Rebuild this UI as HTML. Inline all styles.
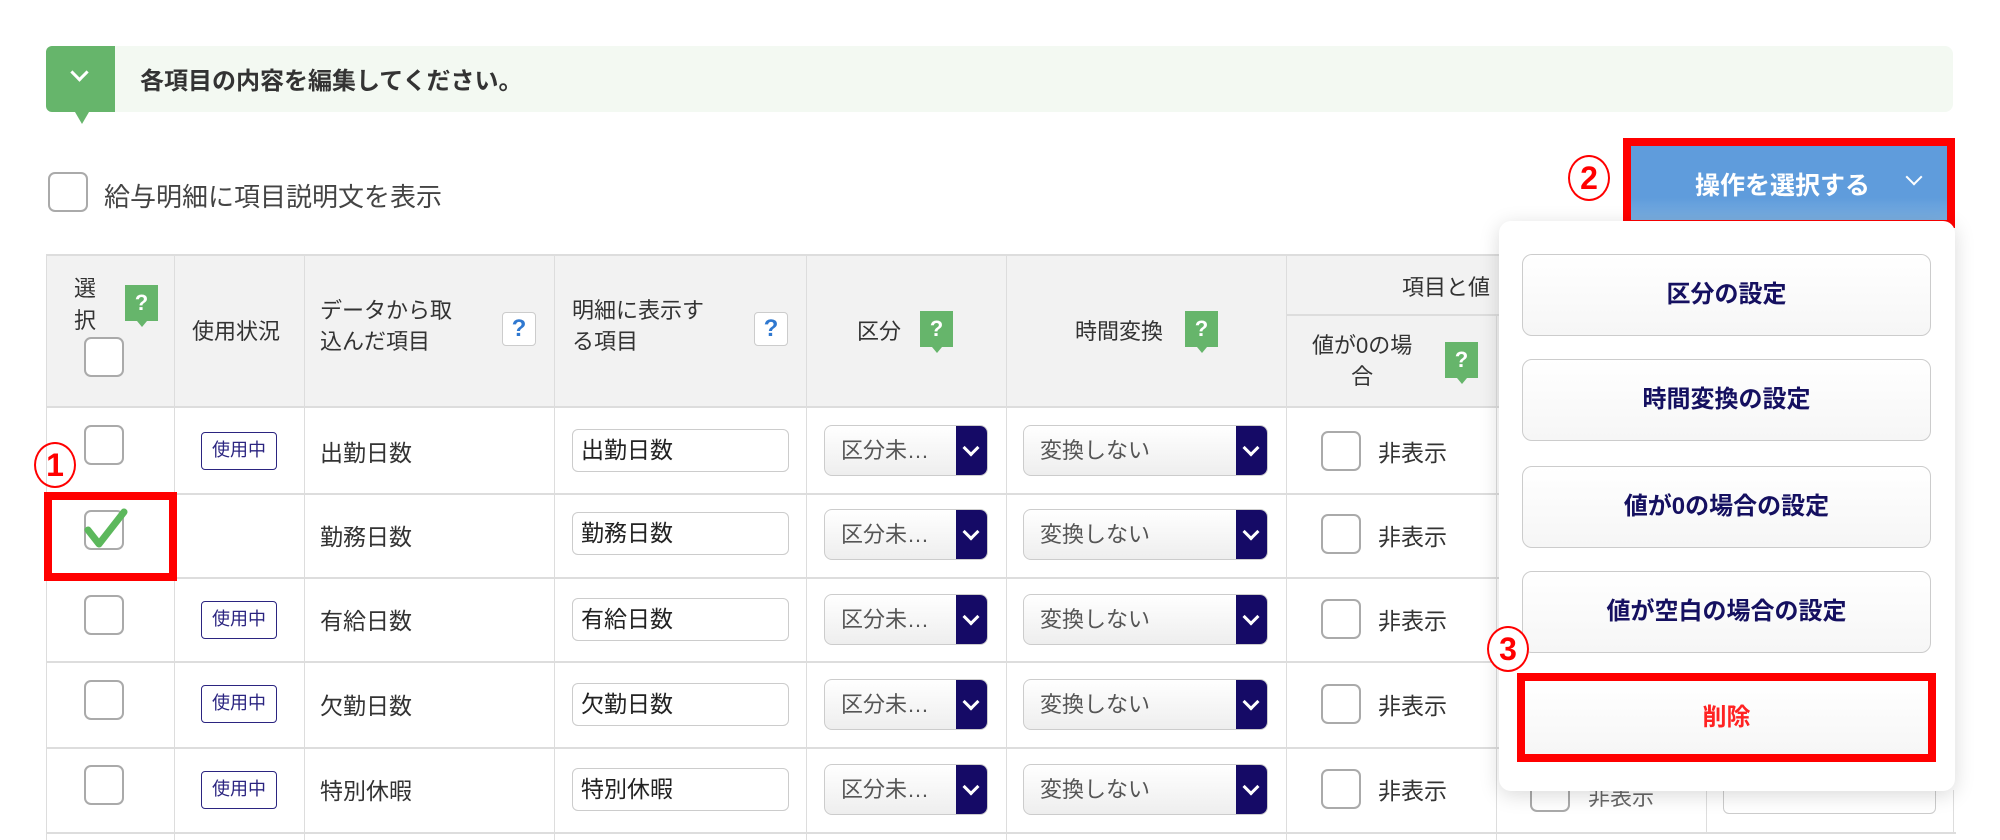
<!DOCTYPE html>
<html><head><meta charset="utf-8"><style>
*{box-sizing:border-box;margin:0;padding:0}
body{width:2000px;height:840px;background:#fff;position:relative;overflow:hidden;font-family:"Liberation Sans","Noto Sans CJK JP",sans-serif;color:#333;font-size:22px}
.a{position:absolute}
.cb{position:absolute;width:40px;height:40px;border:2px solid #aaa;border-radius:7px;background:#fff}
.vl{position:absolute;width:1px;background:#ddd}
.hl{position:absolute;height:2px;background:#ddd}
.gq{position:absolute;width:33px;height:36px;background:#66b56b;color:#fff;font-weight:bold;font-size:22px;text-align:center;line-height:36px}
.gq:after{content:"";position:absolute;left:12px;bottom:-6px;border:5px solid transparent;border-top:6px solid #66b56b;border-bottom:0}
.bq{position:absolute;width:34px;height:34px;border:1px solid #ccc;border-radius:4px;background:#fff;color:#2f78d0;font-weight:bold;font-size:24px;text-align:center;line-height:32px}
.badge{position:absolute;left:201px;width:76px;height:38px;border:1.5px solid #2b2480;border-radius:4px;color:#2b2480;font-size:18px;text-align:center;line-height:35px}
.inp{position:absolute;left:572px;width:217px;height:43px;border:1px solid #ccc;border-radius:6px;padding-left:8px;line-height:41px;font-size:23px;color:#222}
.sel{position:absolute;height:51px;border:1px solid #ccc;border-radius:8px;background:linear-gradient(#fff,#eee);padding-left:16px;line-height:49px;color:#555;overflow:hidden}
.sel i{position:absolute;right:0;top:0;width:31px;height:100%;background:#150a66}
.sel i:after{content:"";position:absolute;left:9px;top:16px;width:9px;height:9px;border-right:3px solid #fff;border-bottom:3px solid #fff;transform:rotate(45deg)}
.mb{position:absolute;left:1522px;width:409px;height:82px;border:1.5px solid #ccc;border-radius:10px;background:linear-gradient(#fff,#f6f6f6);text-align:center;line-height:80px;font-weight:bold;color:#151060;font-size:24px}
.circ{position:absolute;width:42px;height:46px;border:2px solid #f00;border-radius:50%;color:#f00;font-weight:bold;font-size:32px;text-align:center;line-height:42px}
.t{position:absolute;font-size:23px}
</style></head><body>
<!-- banner -->
<div class="a" style="left:46px;top:46px;width:1907px;height:66px;background:#f3f9f2;border-radius:8px"></div>
<div class="a" style="left:46px;top:46px;width:69px;height:66px;background:#66b56b;border-radius:6px 0 0 6px"></div>
<div class="a" style="left:75px;top:112px;border:7px solid transparent;border-top:12px solid #66b56b;border-bottom:0"></div>
<div class="a" style="left:73px;top:66px;width:13px;height:13px;border-right:3px solid #fff;border-bottom:3px solid #fff;transform:rotate(45deg)"></div>
<div class="a" style="left:140px;top:61px;font-weight:bold;font-size:24px;color:#333">各項目の内容を編集してください。</div>
<!-- checkbox label -->
<div class="cb" style="left:48px;top:172px"></div>
<div class="a" style="left:104px;top:177px;font-size:26px;color:#444">給与明細に項目説明文を表示</div>
<!-- table header -->
<div class="a" style="left:46px;top:254px;width:1460px;height:153px;background:#f2f2f2;border-top:2px solid #ddd"></div>
<div class="hl" style="left:46px;top:406px;width:1460px"></div>
<div class="hl" style="left:1286px;top:314px;width:220px"></div>
<div class="vl" style="left:46px;top:254px;height:586px"></div>
<div class="vl" style="left:174px;top:254px;height:586px"></div>
<div class="vl" style="left:304px;top:254px;height:586px"></div>
<div class="vl" style="left:554px;top:254px;height:586px"></div>
<div class="vl" style="left:806px;top:254px;height:586px"></div>
<div class="vl" style="left:1006px;top:254px;height:586px"></div>
<div class="vl" style="left:1286px;top:254px;height:586px"></div>
<div class="vl" style="left:1496px;top:315px;height:525px"></div>
<div class="a" style="left:74px;top:273px;line-height:32px">選<br>択</div>
<div class="gq" style="left:125px;top:285px">?</div>
<div class="cb" style="left:84px;top:337px"></div>
<div class="a" style="left:192px;top:314px">使用状況</div>
<div class="a" style="left:320px;top:295px;line-height:31px">データから取<br>込んだ項目</div>
<div class="bq" style="left:502px;top:312px">?</div>
<div class="a" style="left:572px;top:295px;line-height:31px">明細に表示す<br>る項目</div>
<div class="bq" style="left:754px;top:312px">?</div>
<div class="a" style="left:857px;top:314px">区分</div>
<div class="gq" style="left:920px;top:311px">?</div>
<div class="a" style="left:1075px;top:314px">時間変換</div>
<div class="gq" style="left:1185px;top:311px">?</div>
<div class="a" style="left:1402px;top:270px">項目と値</div>
<div class="a" style="left:1312px;top:330px;line-height:31px;text-align:center">値が0の場<br>合</div>
<div class="gq" style="left:1445px;top:342px">?</div>
<!-- rows -->
<div class="hl" style="left:46px;top:493px;width:1460px"></div>
<div class="hl" style="left:46px;top:577px;width:1460px"></div>
<div class="hl" style="left:46px;top:661px;width:1460px"></div>
<div class="hl" style="left:46px;top:747px;width:1460px"></div>
<div class="hl" style="left:46px;top:832px;width:1910px"></div>

<div class="cb" style="left:84px;top:425px"></div>
<div class="badge" style="top:432px">使用中</div>
<div class="t" style="left:320px;top:434px">出勤日数</div>
<div class="inp" style="top:429px">出勤日数</div>
<div class="sel" style="left:824px;top:425px;width:164px">区分未…<i></i></div>
<div class="sel" style="left:1023px;top:425px;width:245px">変換しない<i></i></div>
<div class="cb" style="left:1321px;top:431px"></div><div class="t" style="left:1378px;top:434px">非表示</div>

<div class="cb" style="left:84px;top:510px"></div>
<svg class="a" style="left:82px;top:506px" width="46" height="44" viewBox="0 0 46 44"><path d="M6 24 L17 38 L42 6" fill="none" stroke="#5cb85c" stroke-width="7" stroke-linecap="round" stroke-linejoin="round"/></svg>
<div class="t" style="left:320px;top:518px">勤務日数</div>
<div class="inp" style="top:512px">勤務日数</div>
<div class="sel" style="left:824px;top:509px;width:164px">区分未…<i></i></div>
<div class="sel" style="left:1023px;top:509px;width:245px">変換しない<i></i></div>
<div class="cb" style="left:1321px;top:514px"></div><div class="t" style="left:1378px;top:518px">非表示</div>

<div class="cb" style="left:84px;top:595px"></div>
<div class="badge" style="top:601px">使用中</div>
<div class="t" style="left:320px;top:602px">有給日数</div>
<div class="inp" style="top:598px">有給日数</div>
<div class="sel" style="left:824px;top:594px;width:164px">区分未…<i></i></div>
<div class="sel" style="left:1023px;top:594px;width:245px">変換しない<i></i></div>
<div class="cb" style="left:1321px;top:599px"></div><div class="t" style="left:1378px;top:602px">非表示</div>

<div class="cb" style="left:84px;top:680px"></div>
<div class="badge" style="top:685px">使用中</div>
<div class="t" style="left:320px;top:687px">欠勤日数</div>
<div class="inp" style="top:683px">欠勤日数</div>
<div class="sel" style="left:824px;top:679px;width:164px">区分未…<i></i></div>
<div class="sel" style="left:1023px;top:679px;width:245px">変換しない<i></i></div>
<div class="cb" style="left:1321px;top:684px"></div><div class="t" style="left:1378px;top:687px">非表示</div>

<div class="cb" style="left:84px;top:765px"></div>
<div class="badge" style="top:771px">使用中</div>
<div class="t" style="left:320px;top:772px">特別休暇</div>
<div class="inp" style="top:768px">特別休暇</div>
<div class="sel" style="left:824px;top:764px;width:164px">区分未…<i></i></div>
<div class="sel" style="left:1023px;top:764px;width:245px">変換しない<i></i></div>
<div class="cb" style="left:1321px;top:769px"></div><div class="t" style="left:1378px;top:772px">非表示</div>

<!-- partially visible right area -->
<div class="vl" style="left:1706px;top:790px;height:42px"></div>
<div class="vl" style="left:1953px;top:790px;height:42px"></div>
<div class="cb" style="left:1530px;top:772px"></div>
<div class="a" style="left:1588px;top:780px;color:#666">非表示</div>
<div class="a" style="left:1723px;top:770px;width:213px;height:44px;border:1px solid #ccc;border-radius:6px"></div>

<!-- action button -->
<div class="circ" style="left:1568px;top:155px">2</div>
<div class="a" style="left:1623px;top:138px;width:332px;height:90px;background:#f00"></div>
<div class="a" style="left:1631px;top:146px;width:316px;height:74px;background:linear-gradient(#5f9cdc 70%,#7aaee0)"></div>
<div class="a" style="left:1695px;top:166px;color:#fff;font-weight:bold;font-size:25px">操作を選択する</div>
<div class="a" style="left:1908px;top:171px;width:12px;height:12px;border-right:2.5px solid #fff;border-bottom:2.5px solid #fff;transform:rotate(45deg)"></div>

<!-- dropdown panel -->
<div class="a" style="left:1499px;top:221px;width:456px;height:570px;background:#fff;border-radius:12px;box-shadow:0 4px 20px rgba(0,0,0,.15)"></div>
<div class="mb" style="top:254px">区分の設定</div>
<div class="mb" style="top:359px">時間変換の設定</div>
<div class="mb" style="top:466px">値が0の場合の設定</div>
<div class="mb" style="top:571px">値が空白の場合の設定</div>
<div class="a" style="left:1517px;top:673px;width:419px;height:89px;border:8px solid #f00;background:linear-gradient(#fff,#f6f6f6);text-align:center;line-height:73px;color:#f22;font-weight:bold;font-size:24px">削除</div>
<div class="circ" style="left:1487px;top:626px;background:#fff">3</div>

<!-- annotation 1 -->
<div class="circ" style="left:34px;top:442px">1</div>
<div class="a" style="left:44px;top:492px;width:133px;height:89px;border:8px solid #f00"></div>
</body></html>
